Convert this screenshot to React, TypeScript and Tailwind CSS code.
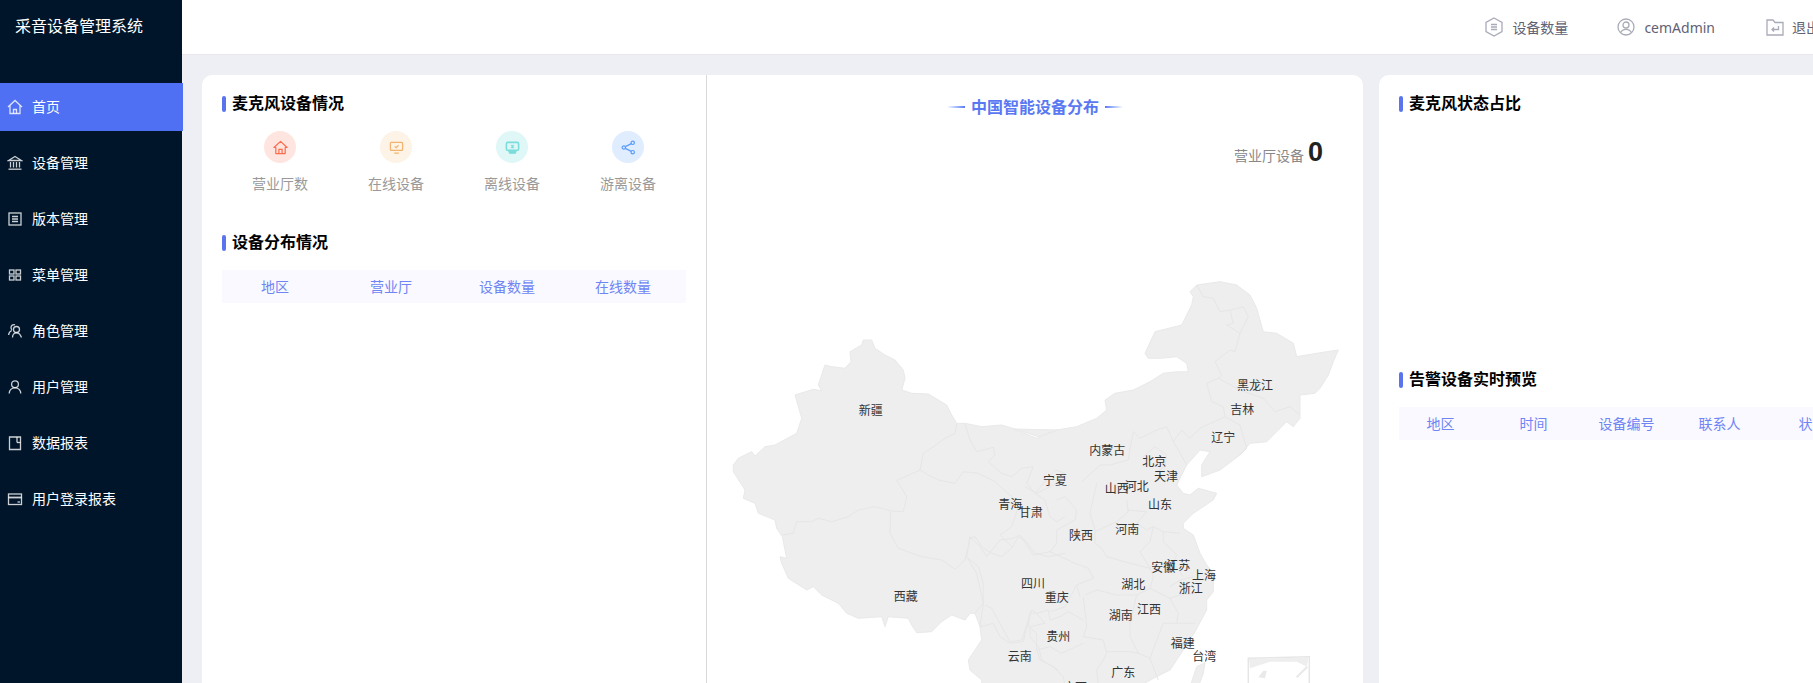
import React from "react";

type Pts = number[];
const abs = (ox: number, oy: number, p: Pts): Pts => {
  const out: Pts = [];
  for (let i = 0; i < p.length; i += 2) out.push(ox + p[i] / 3, oy + p[i + 1] / 3);
  return out;
};
const toD = (p: Pts, close = false) => {
  let d = "";
  for (let i = 0; i < p.length; i += 2) d += (i ? "L" : "M") + p[i].toFixed(1) + " " + p[i + 1].toFixed(1);
  return d + (close ? "Z" : "");
};
const Z8 = (p: Pts) => abs(1000, 275, p);
const Z9 = (p: Pts) => abs(950, 480, p);
const Z10 = (p: Pts) => abs(725, 330, p);

const outline = toD(
  [
    ...Z10([415,30,440,30,450,55,480,75,510,90,535,120,540,145,530,180,560,190,610,192,640,210,665,225,680,255,695,280,720,280,770,290,830,285,880,300,940,320,1000,300]),
    ...Z8([40,462,110,490,170,465,230,455,290,430,320,405,315,375,345,355,400,345,450,320,490,295,530,290,565,290,560,265,530,245,480,250,445,250,435,235,465,170,545,150,575,90,580,65,570,50,590,30,660,20,710,30,750,60,770,100,790,170,830,175,880,205,890,245,950,235,1015,225,1000,260,985,300,960,340,945,355,900,360,900,430,880,455,860,440,830,470,800,500,750,505,720,540,660,585,605,605,605,570,630,530,600,525,560,570,530,630]),
    ...Z9([700,40,720,45,745,25,800,40,790,60,730,100,700,130,700,145,730,165,750,220,770,255,790,280,790,335,770,360,770,390,735,455,700,510,660,570,620,590,585,609,585,700,100,700]),
    ...Z10([770,1050,735,1020,730,990,750,960,770,930,765,890,750,850,735,850,720,870,680,855,650,875,620,905,575,908,560,885,550,865,490,860,480,890,470,860,400,865,365,850,340,820,290,795,265,770,245,780,190,745,170,700,165,680,185,685,172,620,155,595,150,570,100,550,90,520,55,505,60,480,25,425,25,405,40,385,80,365,90,378,120,350,150,345,215,310,230,265,210,195,265,178,290,182,280,165,300,105,320,110,360,115,378,95,375,65,410,45]),
  ],
  true
);

const borders: Pts[] = [
  Z10([695,282,690,310,660,325,625,350,595,370,585,420,515,452,530,475,545,500,535,545,500,543,450,530,400,540,370,560,320,575,280,565,260,575,215,575,205,610,172,615]),
  Z10([497,545,495,610,520,655,590,680,650,690,690,718,720,690,730,650,735,625,750,620,770,650,800,670,830,680,860,655,880,620,900,630,930,670,970,680,1020,670]),
  Z10([585,420,610,435,640,450,690,460,715,425,760,430,810,455,860,500,880,530,860,590,825,615,860,650]),
  Z10([720,282,735,330,755,365,805,352,810,375,790,395,830,430,860,440,890,415,925,410,905,460,930,490,960,510,975,560,995,575,1020,560]),
  Z10([930,490,990,420,1020,430]),
  Z10([730,685,760,710,775,760,775,820,750,850]),
  Z10([780,825,800,835,830,890,855,935,890,930,920,840,935,850,960,880,915,890,915,920,940,950,950,990,1000,1020]),
  Z9([225,20,260,40,320,10]),
  Z9([320,60,345,50,380,90,375,120,320,150,320,190]),
  Z9([440,10,420,100,435,150,435,190,455,205,470,230,540,250,600,265,610,290]),
  Z9([530,60,535,95,500,125,435,155]),
  Z9([530,90,590,95,560,130,590,150,610,140,640,155,690,160]),
  Z9([610,140,600,185,570,215,600,265]),
  Z9([640,155,640,185,680,225,670,250,700,290]),
  Z9([660,320,690,300,730,290]),
  Z9([610,290,600,325,660,355,690,345,740,340]),
  Z9([405,345,440,330,500,345,560,345,600,325]),
  Z9([300,215,375,250,415,265,430,295,380,315,390,350]),
  Z9([560,345,540,430,540,470,565,520,600,535]),
  Z9([660,355,685,400,680,430,640,430,620,480,600,535,625,600]),
  Z9([680,430,735,430]),
  Z9([400,350,410,440,400,470,460,480,470,520,460,540,440,570,445,620]),
  Z9([470,515,540,515,565,520]),
  Z9([240,400,235,440,260,460,260,510,300,500,335,520,400,490]),
  Z9([90,440,130,430,150,470,180,490,220,485,240,400,260,400,295,390,300,420,330,410,355,395,400,420]),
  Z9([380,315,345,380,300,395]),
  Z9([260,510,270,540,310,560,340,590,345,620]),
  Z9([60,170,50,230,80,280,100,370,90,440]),
  Z9([60,170,90,200,110,230,150,180,190,175,210,165,250,225,300,215,320,190]),
  Z8([590,30,610,65,640,70,660,110,690,105,730,95,745,125,720,175,705,230,690,225,645,260,665,300,655,310,620,325,635,380,670,395,675,425]),
  Z8([655,310,720,345,790,370,825,410,870,395,900,420]),
  Z8([690,105,700,145,680,150,720,175]),
  Z8([675,425,720,450,740,520,720,540]),
  Z8([675,425,600,460,570,490,545,465,520,500,535,525,560,570]),
  Z8([520,500,500,455,470,465,420,490,400,470,390,520,385,555,330,570,300,570,245,620]),
  Z8([430,545,465,515,500,540,495,575,470,590]),
];

const labels: [string, number, number][] = [
  ["新疆",870.7,410.3],["西藏",905.7,596.7],["青海",1010.3,504.3],["甘肃",1030.7,512.7],["宁夏",1055,480],["四川",1033,583],["重庆",1056.7,597.7],["贵州",1058.3,636.7],["云南",1019.7,656.7],["陕西",1081,535.3],["河南",1127.3,529.7],["山西",1116.7,488.3],["河北",1136.7,486],["山东",1160,504.3],["内蒙古",1107.3,450],["北京",1154.3,461.7],["天津",1166,476.7],["辽宁",1223.3,437.3],["吉林",1242.3,409.7],["黑龙江",1255,385.3],["安徽",1163.3,567.3],["江苏",1178.3,565.7],["上海",1204,575.7],["浙江",1190.7,588.3],["湖北",1133.3,584.3],["湖南",1120.7,615.3],["江西",1149,609.3],["福建",1182.7,643.3],["台湾",1204.3,656.7],["广东",1123.3,672.7],["广西",1075,687],
];

const S = "fill-none stroke-current";
const Ico = ({ children, className = "" }: { children: React.ReactNode; className?: string }) => (
  <svg viewBox="0 0 16 16" width="16" height="16" className={`${S} ${className}`} strokeWidth="1.3">{children}</svg>
);

const menu: [string, React.ReactNode][] = [
  ["首页", <><path d="M1 8 8 1.5 15 8" /><path d="M3 6.5V14.5H13V6.5" /><path d="M6.5 14.5V10.5H9.5V14.5" /></>],
  ["设备管理", <><path d="M8 1.5 14.5 5.5H1.5Z" /><path d="M3.5 7V12.5M6.5 7V12.5M9.5 7V12.5M12.5 7V12.5" /><path d="M1.5 14.2H14.5" /></>],
  ["版本管理", <><rect x="2" y="2" width="12" height="12" /><path d="M5 5.5H11M5 8H11M5 10.5H11" /></>],
  ["菜单管理", <><rect x="2.5" y="3" width="4.5" height="4" /><rect x="9" y="3" width="4.5" height="4" /><rect x="2.5" y="9" width="4.5" height="4" /><rect x="9" y="9" width="4.5" height="4" /></>],
  ["角色管理", <><circle cx="9.5" cy="6.5" r="3" /><path d="M5.5 14.5C5.5 11.5 7.5 9.8 9.5 9.8S13.5 11.5 14.5 14.5" /><path d="M8 1.8A3 3 0 0 0 4 4.5C4 5.5 4.4 6.3 5 6.9M4.8 7.5C2.8 8.4 1.8 10 1.6 12" /></>],
  ["用户管理", <><circle cx="8" cy="5.2" r="3.4" /><path d="M2.2 14.5C2.4 11 5 8.8 8 8.8S13.6 11 13.8 14.5" /></>],
  ["数据报表", <><path d="M2.5 2H13.5V14.5H2.5Z" /><path d="M10 2V7.5" /><path d="M13.5 7.5H10" /></>],
  ["用户登录报表", <><rect x="1.5" y="3" width="13" height="10.5" /><path d="M1.5 6.5H14.5" strokeWidth="1.8" /><path d="M10.5 11H13" /></>],
];

const Title = ({ children }: { children: React.ReactNode }) => (
  <div className="flex items-center h-[16px]">
    <span className="w-[4px] h-[16px] rounded-[2px] bg-[#5b74ee] mr-[6px]" />
    <span className="text-[16px] font-bold text-black leading-[16px] whitespace-nowrap -mt-[2px]">{children}</span>
  </div>
);

const stats: { label: string; bg: string; color: string; icon: React.ReactNode }[] = [
  { label: "营业厅数", bg: "bg-[#ffe5df]", color: "text-[#fb6d4e]", icon: <><path d="M1 8 8 1.5 15 8H13V14.5H3V8Z" strokeLinejoin="round" /><path d="M6.3 14.5V10H9.7V14.5" /></> },
  { label: "在线设备", bg: "bg-[#fdf3e6]", color: "text-[#f4b26c]", icon: <><rect x="1.5" y="2.5" width="13" height="8.5" rx="1" /><path d="M5.5 14H10.5" /><path d="M6 6.8 7.6 8.2 10.2 5.6" /></> },
  { label: "离线设备", bg: "bg-[#e0f7f7]", color: "text-[#7cdcdc]", icon: <><rect x="1.5" y="2.5" width="13" height="8.5" rx="1.5" strokeWidth="1.7" /><path d="M4 11.5H12L11 14H5Z" className="fill-current" /><path d="M6.3 5.5H9.7L8.6 7 9.7 8.5H6.3L7.4 7Z" className="fill-current" strokeWidth="0.5" /></> },
  { label: "游离设备", bg: "bg-[#e0edff]", color: "text-[#5b9dfa]", icon: <><circle cx="12.5" cy="3" r="1.8" /><circle cx="3" cy="8" r="1.8" /><circle cx="12.5" cy="13" r="1.8" /><path d="M4.6 7.1 11 3.9M4.6 8.9 11 12.1" /></> },
];

const TableHead = ({ cols, grid, wrap }: { cols: string[]; grid: string; wrap: string }) => (
  <div className={`h-[33px] bg-[#f9f9ff] overflow-hidden ${wrap}`}>
    <div className={`grid -ml-[5px] h-full items-center text-[14px] text-[#6f85f3] text-center ${grid}`}>
      {cols.map((c) => (
        <span key={c} className="whitespace-nowrap">{c}</span>
      ))}
    </div>
  </div>
);

export default function App() {
  return (
    <div className="flex w-[1903px] h-[683px] overflow-hidden bg-[#eeeff4] [font-family:'Noto_Sans','Noto_Sans_CJK_SC',sans-serif]">
      <aside className="w-[182px] flex-none bg-[#001529] text-white relative z-10">
        <div className="h-[83px] pl-[15px] pt-[14px] text-[16px] leading-[24px] whitespace-nowrap">采音设备管理系统</div>
        <nav className="flex flex-col gap-[8px]">
          {menu.map(([name, icon], i) => (
            <div key={name} className={`h-[48px] flex items-center pl-[7px] text-[14px] ${i === 0 ? "w-[183px] bg-[#5070f4]" : ""}`}>
              <Ico className="text-white/80 mr-[9px]">{icon}</Ico>
              <span className="whitespace-nowrap pb-[2px]">{name}</span>
            </div>
          ))}
        </nav>
      </aside>
      <div className="flex-1 min-w-0 flex flex-col">
        <header className="h-[55px] flex-none bg-white border-b border-[#e8e8ec] flex items-center justify-end pr-[83px] text-[14px] text-[#5f6274]">
          <div className="flex items-center mr-[49px]">
            <svg viewBox="0 0 18 20" width="18" height="20" className={`${S} text-[#a9abb8] mr-[9px]`} strokeWidth="1.3"><path d="M9 1 17 5.5V14.5L9 19 1 14.5V5.5Z" /><path d="M6 7.5H12M6 10H12M6 12.5H12" /></svg>
            <span>设备数量</span>
          </div>
          <div className="flex items-center mr-[51px]">
            <svg viewBox="0 0 18 18" width="18" height="18" className={`${S} text-[#a9abb8] mr-[9px]`} strokeWidth="1.3"><circle cx="9" cy="9" r="8" /><circle cx="9" cy="7" r="3" /><path d="M3.5 14.8C4.5 12.5 6.5 11.4 9 11.4S13.5 12.5 14.5 14.8" /></svg>
            <span>cemAdmin</span>
          </div>
          <div className="flex items-center">
            <svg viewBox="0 0 18 18" width="18" height="18" className={`${S} text-[#a9abb8] mr-[8px]`} strokeWidth="1.3"><path d="M1 2H7L9 4.5H17V17H1Z" /><path d="M12.5 8V11.5H6M8 9.5 6 11.5 8 13.5" /></svg>
            <span>退出</span>
          </div>
        </header>
        <main className="flex-1 min-h-0 overflow-hidden flex pl-[20px] pt-[20px]">
          <section className="w-[504px] flex-none h-[640px] bg-white rounded-tl-[10px] pt-[21px] pl-[20px]">
            <Title>麦克风设备情况</Title>
            <div className="grid grid-cols-[repeat(4,116px)] mt-[19px]">
              {stats.map((s) => (
                <div key={s.label} className="flex flex-col items-center">
                  <div className={`w-[32px] h-[32px] rounded-full flex items-center justify-center ${s.bg} ${s.color}`}>
                    <svg viewBox="0 0 16 16" width="15" height="15" className={S} strokeWidth="1.3">{s.icon}</svg>
                  </div>
                  <span className="mt-[10px] text-[14px] leading-[22px] text-[#999999]">{s.label}</span>
                </div>
              ))}
            </div>
            <div className="mt-[40px]"><Title>设备分布情况</Title></div>
            <TableHead cols={["地区", "营业厅", "设备数量", "在线数量"]} grid="grid-cols-[repeat(4,116px)]" wrap="mt-[19px] w-[464px]" />
          </section>
          <section className="w-[657px] flex-none h-[640px] bg-white rounded-tr-[10px] border-l border-[#d9d9dc] overflow-hidden">
            <div className="flex items-center justify-center mt-[20px] h-[24px] text-[#5a78f2]">
              <span className="w-[18px] h-[2px] bg-gradient-to-r from-white to-[#5a78f2]" />
              <span className="mx-[6px] text-[16px] font-semibold leading-[24px]">中国智能设备分布</span>
              <span className="w-[18px] h-[2px] bg-gradient-to-r from-[#5a78f2] to-white" />
            </div>
            <div className="flex items-end justify-end mt-[18px] pr-[40px] h-[30px]">
              <span className="text-[14px] leading-[22px] text-[#888888] mr-[4px]">营业厅设备</span>
              <span className="text-[27px] leading-[30px] font-bold text-[#222222] [font-family:'Liberation_Sans',sans-serif]">0</span>
            </div>
            <svg viewBox="720 270 640 413" width="640" height="413" className="mt-[103px] ml-[13px] block">
              <path d={outline} fill="#eeeeee" stroke="#e9e9e9" strokeWidth="1" strokeLinejoin="round" />
              {borders.map((b, i) => (
                <path key={i} d={toD(b)} fill="none" stroke="#e6e6e6" strokeWidth="1" strokeLinejoin="round" />
              ))}
              <path d={toD(Z9([720,620,740,560,765,548,760,580,745,620]), true)} fill="#eeeeee" stroke="#e9e9e9" />
              <path d={toD(Z9([895,620,895,535,1078,530,1078,620]))} fill="none" stroke="#e6e6e6" strokeWidth="1.5" />
              <path d={toD(Z9([897,537,1076,532,1070,560,1040,545,960,545,900,565]), true)} fill="#eeeeee" />
              <path d={toD(Z9([925,592,940,572,950,572,945,595]), true)} fill="#e9e9e9" />
              <path d={toD(Z9([1040,592,1072,560]))} fill="none" stroke="#e9e9e9" strokeWidth="2" />
              {labels.map(([t, x, y]) => (
                <text key={t} x={x} y={y} textAnchor="middle" dominantBaseline="central" fontSize="12" fill="#333333">{t}</text>
              ))}
            </svg>
          </section>
          <section className="w-[504px] flex-none ml-[16px] h-[640px] bg-white rounded-t-[10px] pt-[21px] pl-[20px]">
            <Title>麦克风状态占比</Title>
            <div className="mt-[260px]"><Title>告警设备实时预览</Title></div>
            <TableHead cols={["地区", "时间", "设备编号", "联系人", "状态"]} grid="grid-cols-[repeat(5,93px)]" wrap="mt-[19px] w-[470px]" />
          </section>
        </main>
      </div>
    </div>
  );
}
